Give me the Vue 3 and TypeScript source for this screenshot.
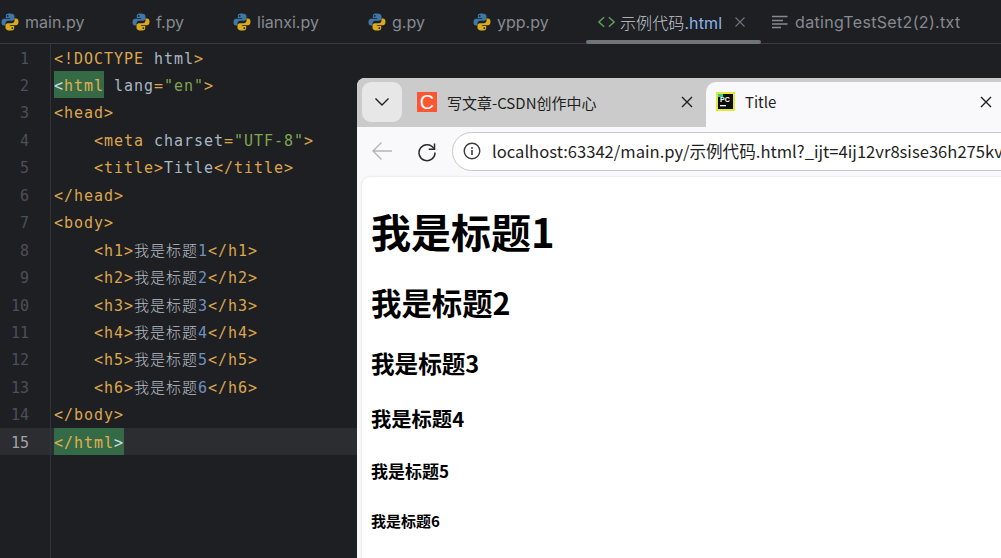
<script setup lang="ts">
interface Tab { name: string; kind: string; width: number }
const tabs: Tab[] = [
  { name: 'main.py', kind: 'py', width: 131 },
  { name: 'f.py', kind: 'py', width: 101 },
  { name: 'lianxi.py', kind: 'py', width: 135 },
  { name: 'g.py', kind: 'py', width: 105 },
  { name: 'ypp.py', kind: 'py', width: 113 },
]
type Tok = [string, string]
const T = 'tag', X = 'txt', S = 'str', N = 'num', M = 'attr'
const lines: { indent?: boolean; toks: Tok[] }[] = [
  { toks: [['<!DOCTYPE', T], [' html', X], ['>', T]] },
  { toks: [['<', 'hlb'], ['html', 'hl'], [' lang', M], ['=', T], ['"en"', S], ['>', T]] },
  { toks: [['<head>', T]] },
  { indent: true, toks: [['<meta', T], [' charset', M], ['=', T], ['"UTF-8"', S], ['>', T]] },
  { indent: true, toks: [['<title>', T], ['Title', X], ['</title>', T]] },
  { toks: [['</head>', T]] },
  { toks: [['<body>', T]] },
  ...[1, 2, 3, 4, 5, 6].map((n) => ({
    indent: true,
    toks: [[`<h${n}>`, T], ['我是标题', 'cjk'], [String(n), N], [`</h${n}>`, T]] as Tok[],
  })),
  { toks: [['</body>', T]] },
  { toks: [['</html', 'hl'], ['>', 'hlb']] },
]
const heads = [1, 2, 3, 4, 5, 6]
</script>

<template>
  <div class="ide">
    <div class="tabbar">
      <div v-for="t in tabs" :key="t.name" class="tab" :style="{ width: t.width + 'px' }">
        <svg class="py" viewBox="0 0 20 20" width="20" height="20">
          <path fill="#3f78a8" d="M9.8 1.5c-4 0-4 1.7-4 2.6v2h4.300v.7H4C2.400 6.800 1.500 8 1.500 10.200s1 3.300 2.500 3.300h1.500v-2c0-1.500 1.200-2.700 2.800-2.700h4c1.200 0 2.200-1 2.200-2.200V4.100c0-1.500-1.600-2.600-4.700-2.600z"/>
          <path fill="#d9a91e" d="M10.200 18.500c4 0 4-1.700 4-2.600v-2H9.900v-.7H16c1.600 0 2.500-1.200 2.500-3.400s-1-3.300-2.500-3.300h-1.500v2c0 1.500-1.200 2.700-2.800 2.700h-4c-1.200 0-2.200 1-2.200 2.200v2.500c0 1.500 1.600 2.600 4.700 2.600z"/>
          <circle cx="7.700" cy="3.900" r=".9" fill="#1e1f22"/><circle cx="12.300" cy="16.100" r=".9" fill="#1e1f22"/>
        </svg>
        <span class="tabname">{{ t.name }}</span>
      </div>
      <div class="tab active">
        <svg viewBox="0 0 20 14" width="19" height="14" class="code"><path d="M7.500 2 2 7l5.500 5M12.500 2 18 7l-5.500 5" fill="none" stroke="#5c9e5c" stroke-width="1.600"/></svg>
        <span class="tabname act"><span class="acn">示例代码</span><span class="ach">.html</span></span>
        <svg viewBox="0 0 12 12" width="12" height="12" class="tclose"><path d="M1.500 1.500l9 9M10.500 1.500l-9 9" stroke="#6f737a" stroke-width="1.100"/></svg>
        <i class="underline"></i>
      </div>
      <div class="tab doc">
        <svg viewBox="0 0 16 14" width="16" height="14"><path d="M0 1.500h15.500M0 5.500h11M0 9h15.500M0 12.500h9" stroke="#868a91" stroke-width="1.300" fill="none"/></svg>
        <span class="tabname">datingTestSet2(2).txt</span>
      </div>
    </div>

    <div class="editor">
      <div class="gutter">
        <div v-for="(_, i) in lines" :key="i" class="ln" :class="{ cur: i === 14 }">{{ i + 1 }}</div>
      </div>
      <div class="code-area">
        <div v-for="(l, i) in lines" :key="i" class="cl" :class="{ cur: i === 14, indent: l.indent }">
          <span v-for="(tk, j) in l.toks" :key="j" :class="tk[1]">{{ tk[0] }}</span>
        </div>
      </div>
    </div>

    <div class="browser">
      <div class="strip">
        <div class="sq">
          <svg viewBox="0 0 16 10" width="16" height="10"><path d="M1.500 1.500 8 8l6.500-6.500" fill="none" stroke="#1f1f1f" stroke-width="1.400"/></svg>
        </div>
        <div class="btab off">
          <span class="csdn">C</span>
          <span class="btitle">写文章-CSDN创作中心</span>
          <svg viewBox="0 0 12 12" width="12" height="12" class="bx"><path d="M1 1l10 10M11 1 1 11" stroke="#1f1f1f" stroke-width="1.400"/></svg>
        </div>
        <div class="btab on">
          <svg viewBox="0 0 19 19" width="19" height="19" class="pc">
            <rect width="19" height="19" fill="#e6e63a"/><rect x="2" y="2" width="15" height="15" fill="#0b0f0c"/>
            <rect x="2" y="2" width="5" height="3" fill="#21d789"/>
            <text x="4" y="9.500" font-size="7" font-weight="700" fill="#fff" font-family="Liberation Sans">PC</text>
            <rect x="4" y="13" width="6" height="1.300" fill="#fff"/>
          </svg>
          <span class="btitle">Title</span>
          <svg viewBox="0 0 12 12" width="12" height="12" class="bx"><path d="M1 1l10 10M11 1 1 11" stroke="#1f1f1f" stroke-width="1.400"/></svg>
        </div>
      </div>
      <div class="toolbar">
        <svg viewBox="0 0 22 20" width="22" height="20" class="back"><path d="M21 10H2M10.500 1.500 2 10l8.500 8.500" fill="none" stroke="#b4b4b4" stroke-width="1.400"/></svg>
        <svg viewBox="0 0 20 20" width="20" height="20" class="reload"><path d="M16.800 6.500A8 8 0 1 0 18 10.500" fill="none" stroke="#2b2b2b" stroke-width="1.500"/><path d="M17.500 1.500v5.800h-5.800" fill="none" stroke="#2b2b2b" stroke-width="1.500"/></svg>
        <div class="omni">
          <svg viewBox="0 0 18 18" width="18" height="18" class="info"><circle cx="9" cy="9" r="7.800" fill="none" stroke="#3c3c3c" stroke-width="1.400"/><rect x="8.200" y="8" width="1.600" height="5" fill="#3c3c3c"/><rect x="8.200" y="5" width="1.600" height="1.700" fill="#3c3c3c"/></svg>
          <span class="url">localhost:63342/main.py/示例代码.html?_ijt=4ij12vr8sise36h275kv</span>
        </div>
      </div>
      <div class="page">
        <component :is="'h' + n" v-for="n in heads" :key="n">我是标题{{ n }}</component>
      </div>
    </div>
  </div>
</template>

<style>
html, body { margin: 0; padding: 0; overflow: hidden; background: #1e1f22; }
</style>

<style scoped>
.ide {
  position: relative; width: 1001px; height: 558px; overflow: hidden; background: #1e1f22;
  font-family: "Inter", "Noto Sans CJK SC", sans-serif;
}
.tabbar { display: flex; align-items: center; height: 43px; border-bottom: 1px solid #393b40; box-sizing: content-box; }
.tab { position: relative; display: flex; align-items: center; height: 43px; flex: none; color: #868a91; box-sizing: border-box; }
.py { margin-right: 5px; flex: none; }
.tabname { font-size: 16px; white-space: nowrap; font-family: "Inter", "Noto Sans CJK SC", sans-serif; }
.tab.active { width: 187px; padding-left: 12px; }
.code { margin-right: 4px; }
.act { font-size: 16px; letter-spacing: .1px; }
.acn { color: #c5c8ce; font-weight: 300; }
.ach { color: #8cb4e8; }
.tclose { margin-left: 12px; }
.underline { position: absolute; left: 1px; bottom: -1px; width: 175px; height: 4px; border-radius: 2px; background: #6f737a; }
.tab.doc { gap: 7px; }
.tab.doc .tabname { font-size: 16px; letter-spacing: .33px; }
.editor { display: flex; height: 514px; margin-top: -.5px; }
.gutter { width: 50px; flex: none; border-right: 1px solid #313438; }
.ln { height: 27.46px; box-sizing: border-box; padding: 3px 21px 0 0; text-align: right; font: 15px/24.46px "DejaVu Sans Mono", monospace; color: #4b5059; }
.ln.cur { color: #a1a3ab; background: #2b2d30; }
.code-area { flex: 1; }
.cl { display: flex; height: 27.46px; padding-left: 3px; font: 15px/24.46px "DejaVu Sans Mono", "Noto Sans CJK SC", monospace; letter-spacing: .97px; color: #a9b7c6; }
.cl span { display: block; padding-top: 3px; white-space: pre; }
.cl.indent { padding-left: 43px; }
.cl.cur { background: #2b2d30; }
.tag { color: #dca64e; }
.txt { color: #a9b7c6; }
.attr { color: #a9b7c6; }
.str { color: #7fa650; }
.num { color: #6f8fc0; }
.cjk { font-size: 15px; letter-spacing: 1px; color: #b6bcc6; font-weight: 300; }
.hl { color: #e0b050; background: #356a47; }
.hlb { color: #d0dbe8; background: #356a47; }

.browser {
  position: absolute; left: 357px; top: 78px; width: 660px; height: 490px;
  border-top-left-radius: 8px; background: #f9f9fb; overflow: hidden;
  font-family: "Noto Sans CJK SC", sans-serif;
}
.strip { display: flex; height: 49px; background: #cbcbcb; padding: 4px 0 0 5px; box-sizing: border-box; }
.sq { width: 40px; height: 40px; border-radius: 9px; background: #e7e7e7; display: flex; align-items: center; justify-content: center; flex: none; }
.btab { position: relative; display: flex; align-items: center; height: 45px; flex: none; font-size: 15px; color: #1f1f1f; box-sizing: border-box; padding-bottom: 5px; }
.btab.off { width: 304px; padding-left: 15px; }
.btab.on { width: 310px; background: #f9f9fb; border-radius: 10px 10px 0 0; padding-left: 10px; padding-bottom: 6px; }
.csdn { width: 20px; height: 20px; background: #fc5531; color: #fff; font: 400 20px/20px "Liberation Sans", sans-serif; text-align: center; flex: none; }
.btitle { margin-left: 10px; white-space: nowrap; }
.bx { position: absolute; top: 14px; }
.off .bx { right: 13px; }
.on .bx { left: 274px; }
.pc { flex: none; }
.toolbar { display: flex; align-items: center; height: 50px; background: #f9f9fb; padding-bottom: 2px; box-sizing: border-box; }
.toolbar svg { flex: none; }
.back { margin-left: 14px; }
.reload { margin-left: 24px; margin-top: 1px; }
.omni { display: flex; align-items: center; margin-left: 15px; flex: none; width: 600px; height: 39px; box-sizing: border-box; background: #fff; border: 1px solid #c7c7c7; border-radius: 20px; padding-left: 10px; }
.info { flex: none; }
.url { margin-left: 11px; font-size: 16.6px; color: #1f1f1f; white-space: nowrap; }
.page { margin-left: 5px; background: #fff; border-radius: 8px 0 0 0; height: 400px; padding: 25px 0 0 9px; color: #000; box-shadow: 0 0 2px #d0d0d0; }
h1, h2, h3, h4, h5, h6 { margin: 0; font-weight: 700; white-space: nowrap; font-family: "Noto Sans CJK SC", sans-serif; }
h1 { font-size: 40px; line-height: 58px; margin-bottom: 20px; }
h2 { font-size: 30.4px; line-height: 44px; margin-bottom: 22px; }
h3 { font-size: 23.6px; line-height: 34px; margin-bottom: 24px; }
h4 { font-size: 20.3px; line-height: 29px; margin-bottom: 26px; }
h5 { font-size: 17px; line-height: 24px; margin-bottom: 28px; }
h6 { font-size: 15px; line-height: 20px; }
</style>
